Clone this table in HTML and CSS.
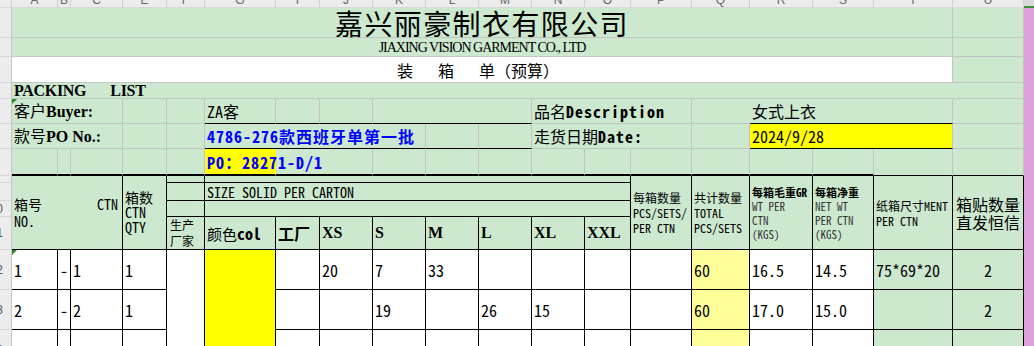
FILE: index.html
```html
<!DOCTYPE html>
<html lang="zh-CN">
<head>
<meta charset="utf-8">
<title>装箱单</title>
<link rel="stylesheet" href="styles.css">
</head>
<body>
<table class="sheet">
<colgroup>
<col class="w-rh"><col class="w-a"><col class="w-b"><col class="w-c"><col class="w-e"><col class="w-f"><col class="w-g"><col class="w-i"><col class="w-j"><col class="w-k"><col class="w-l"><col class="w-m"><col class="w-n"><col class="w-o"><col class="w-p"><col class="w-q"><col class="w-r"><col class="w-s"><col class="w-t"><col class="w-u"><col class="w-v">
</colgroup>
<tr class="h-hdr">
<td class="ch"></td>
<td class="ch"><div class="cl"><span>A</span></div></td>
<td class="ch"><div class="cl"><span>B</span></div></td>
<td class="ch"><div class="cl"><span>C</span></div></td>
<td class="ch"><div class="cl"><span>E</span></div></td>
<td class="ch"><div class="cl"><span>F</span></div></td>
<td class="ch"><div class="cl"><span>G</span></div></td>
<td class="ch"><div class="cl"><span>I</span></div></td>
<td class="ch"><div class="cl"><span>J</span></div></td>
<td class="ch"><div class="cl"><span>K</span></div></td>
<td class="ch"><div class="cl"><span>L</span></div></td>
<td class="ch"><div class="cl"><span>M</span></div></td>
<td class="ch"><div class="cl"><span>N</span></div></td>
<td class="ch"><div class="cl"><span>O</span></div></td>
<td class="ch"><div class="cl"><span>P</span></div></td>
<td class="ch"><div class="cl"><span>Q</span></div></td>
<td class="ch"><div class="cl"><span>R</span></div></td>
<td class="ch"><div class="cl"><span>S</span></div></td>
<td class="ch"><div class="cl"><span>T</span></div></td>
<td class="ch"><div class="cl"><span>U</span></div></td>
<td class="ch sel"></td>
</tr>
<tr class="h1">
<td class="rh"></td>
<td colspan="18" class="title-cn">嘉兴丽豪制衣有限公司</td>
<td></td>
<td class="pk"></td>
</tr>
<tr class="h2">
<td class="rh"></td>
<td colspan="18" class="title-en">JIAXING VISION GARMENT CO., LTD</td>
<td></td>
<td class="pk"></td>
</tr>
<tr class="h3">
<td class="rh"></td>
<td colspan="18" class="wh doc"><span>装</span><span class="sp">箱</span><span class="sp">单（预算）</span></td>
<td></td>
<td class="pk"></td>
</tr>
<tr class="h4">
<td class="rh"></td>
<td colspan="18" class="pl nr">PACKING<span class="pl-gap">LIST</span></td>
<td></td>
<td class="pk"></td>
</tr>
<tr class="h5">
<td class="rh"></td>
<td colspan="3" class="lbl mark">客户<b class="tb">Buyer:</b></td>
<td></td>
<td></td>
<td class="kb val">ZA客</td>
<td class="kb"></td>
<td class="kb"></td>
<td colspan="3" class="kb"></td>
<td colspan="3" class="lbl">品名<b class="mb">Description</b></td>
<td class="nr"></td>
<td colspan="3" class="kb val">女式上衣</td>
<td></td>
<td class="pk"></td>
</tr>
<tr class="h6">
<td class="rh"></td>
<td colspan="3" class="lbl">款号<b class="tb">PO No.:</b></td>
<td></td>
<td></td>
<td colspan="4" class="kb po">4786-276款西班牙单第一批</td>
<td class="kb"></td>
<td class="kb"></td>
<td colspan="3" class="lbl">走货日期<b class="mb">Date:</b></td>
<td></td>
<td colspan="3" class="ye kb val">2024/9/28</td>
<td></td>
<td class="pk"></td>
</tr>
<tr class="h7">
<td class="rh"></td>
<td class="kb2"></td>
<td class="kb2"></td>
<td class="kb2"></td>
<td class="kb2"></td>
<td class="kb2"></td>
<td class="ye kb2 nr po">PO：28271-D/1</td>
<td colspan="2" class="kb2"></td>
<td class="kb2"></td>
<td class="kb2"></td>
<td class="kb2"></td>
<td class="kb2"></td>
<td class="kb2"></td>
<td class="kb2"></td>
<td class="kb2"></td>
<td class="kb2"></td>
<td class="kb2"></td>
<td class="kb"></td>
<td class="kb"></td>
<td class="pk"></td>
</tr>
<tr class="h8 th">
<td class="rh"></td>
<td colspan="3" rowspan="4" class="hno">
<div class="ln"><span>箱号</span><span>CTN</span></div>
<div>NO.</div>
</td>
<td rowspan="4" class="hq"><div>箱数</div><div>CTN</div><div>QTY</div></td>
<td></td>
<td colspan="8"></td>
<td rowspan="4" class="hs"><div>每箱数量</div><div>PCS/SETS/</div><div>PER CTN</div></td>
<td rowspan="4" class="hs"><div>共计数量</div><div>TOTAL</div><div>PCS/SETS</div></td>
<td rowspan="4" class="hw"><div class="hw-t">每箱毛重GR</div><div>WT PER</div><div>CTN</div><div>(KGS)</div></td>
<td rowspan="4" class="hw"><div class="hw-t">每箱净重</div><div>NET WT</div><div>PER CTN</div><div>(KGS)</div></td>
<td rowspan="4" class="hs"><div>纸箱尺寸MENT</div><div>PER CTN</div></td>
<td rowspan="4" class="hb"><div>箱贴数量</div><div>直发恒信</div></td>
<td class="pk"></td>
</tr>
<tr class="h9 th">
<td class="rh"></td>
<td></td>
<td colspan="8" class="size">SIZE SOLID PER CARTON</td>
<td class="pk"></td>
</tr>
<tr class="h10 th">
<td class="rh"><div class="rn">10</div></td>
<td></td>
<td colspan="8"></td>
<td class="pk"></td>
</tr>
<tr class="h11 th">
<td class="rh"><div class="rn">11</div></td>
<td class="hf"><div>生产</div><div>厂家</div></td>
<td class="hc">颜色<b>col</b></td>
<td class="hc"><b>工厂</b></td>
<td class="sz">XS</td>
<td class="sz">S</td>
<td class="sz">M</td>
<td class="sz">L</td>
<td class="sz">XL</td>
<td class="sz">XXL</td>
<td class="pk"></td>
</tr>
<tr class="hd dr">
<td class="rh"><div class="rn">12</div></td>
<td class="mark">1</td>
<td>-</td>
<td>1</td>
<td>1</td>
<td rowspan="3"></td>
<td rowspan="3" class="ye"></td>
<td></td>
<td>20</td>
<td>7</td>
<td>33</td>
<td></td>
<td></td>
<td></td>
<td></td>
<td class="ly">60</td>
<td>16.5</td>
<td>14.5</td>
<td class="gr">75*69*20</td>
<td class="gr ctr">2</td>
<td class="pk"></td>
</tr>
<tr class="hd dr">
<td class="rh"><div class="rn">13</div></td>
<td>2</td>
<td>-</td>
<td>2</td>
<td>1</td>
<td></td>
<td></td>
<td>19</td>
<td></td>
<td>26</td>
<td>15</td>
<td></td>
<td></td>
<td class="ly">60</td>
<td>17.0</td>
<td>15.0</td>
<td class="gr"></td>
<td class="gr ctr">2</td>
<td class="pk"></td>
</tr>
<tr class="hd dr">
<td class="rh"><div class="rn">14</div></td>
<td></td>
<td></td>
<td></td>
<td></td>
<td></td>
<td></td>
<td></td>
<td></td>
<td></td>
<td></td>
<td></td>
<td></td>
<td class="ly"></td>
<td></td>
<td></td>
<td class="gr"></td>
<td class="gr"></td>
<td class="pk"></td>
</tr>
</table>
</body>
</html>
```
FILE: styles.css
```css
:root {
  --green: #cce8cf;
  --grid: #c4c4c4;
  --song: "Noto Sans Mono CJK SC", "Noto Sans CJK SC", "Liberation Mono", monospace;
  --cjk: "Noto Sans CJK SC", sans-serif;
  --serif: "Liberation Serif", "Noto Sans CJK SC", serif;
}

html, body {
  margin: 0;
  padding: 0;
  overflow: hidden;
  background: #ffffff;
}

body {
  width: 1034px;
  height: 346px;
}

.sheet {
  border-collapse: separate;
  border-spacing: 0;
  table-layout: fixed;
  width: 1034px;
  font-family: var(--song);
  font-size: 16px;
  color: #000;
}

.w-rh { width: 12px; }
.w-a { width: 46px; }
.w-b { width: 13px; }
.w-c { width: 52px; }
.w-e { width: 44px; }
.w-f { width: 38px; }
.w-g { width: 71px; }
.w-i { width: 44px; }
.w-j { width: 53px; }
.w-k { width: 53px; }
.w-l { width: 53px; }
.w-m { width: 53px; }
.w-n { width: 53px; }
.w-o { width: 46px; }
.w-p { width: 61px; }
.w-q { width: 58px; }
.w-r { width: 63px; }
.w-s { width: 61px; }
.w-t { width: 79px; }
.w-u { width: 71px; }
.w-v { width: 10px; }

/* row heights */
.h-hdr { height: 8px; }
.h1 { height: 30px; }
.h2 { height: 19px; }
.h3 { height: 26px; }
.h4 { height: 16px; }
.h5 { height: 25px; }
.h6 { height: 25px; }
.h7 { height: 27px; }
.h8 { height: 7px; }
.h9 { height: 18px; }
.h10 { height: 16px; }
.h11 { height: 33px; }
.hd { height: 40px; }

.sheet td {
  padding: 0;
  background: var(--green);
  border-right: 1px solid var(--grid);
  border-bottom: 1px solid var(--grid);
  white-space: nowrap;
  vertical-align: middle;
  line-height: 20px;
  overflow: visible;
}

/* table header block and data rows use black borders */
.sheet .th td {
  border-right-color: #000;
  border-bottom-color: #000;
  vertical-align: middle;
}

.sheet .dr td {
  background: #ffffff;
  border-right-color: #000;
  border-bottom-color: #000;
  padding-left: 2px;
  font-size: 16px;
}

/* modifiers */
.sheet td.wh { background: #ffffff; }
.sheet td.ye { background: #ffff00; }
.sheet td.ly { background: #ffff99; }
.sheet td.gr { background: var(--green); }
.sheet td.nr { border-right-color: transparent; }
.sheet td.kb { border-bottom-color: #000; }
.sheet td.kb2 { border-bottom: 2px solid #000; }
.sheet td.ctr { text-align: center; padding-left: 0; }

.sheet td.pk {
  background: #dda0dd;
  border-right: 0;
  border-bottom: 0;
  padding: 0;
}

.sheet td.rh {
  background: #ececec;
  border-right: 1px solid #c6c6c6;
  border-bottom: 1px solid #d6d6d6;
  padding: 0;
}

.rn {
  width: 12px;
  overflow: hidden;
  direction: rtl;
  padding-right: 9px;
  box-sizing: border-box;
  font: 12px/12px "Liberation Sans", sans-serif;
  color: #555;
}

/* column letter header */
.sheet td.ch {
  background: #ececec;
  border-right: 1px solid #d0d0d0;
  border-bottom: 1px solid #d8d8d8;
  vertical-align: top;
  line-height: 7px;
}

.sheet td.ch.sel {
  background: #d8d8d8;
  border-right: 0;
  border-bottom: 2px solid #3c8f3c;
}

.cl {
  height: 7px;
  overflow: hidden;
}

.cl span {
  display: block;
  margin-top: -7px;
  font: 12px/14px "Liberation Sans", sans-serif;
  color: #666;
  text-align: center;
}

/* titles */
.sheet td.title-cn {
  font-family: var(--cjk);
  font-size: 28px;
  line-height: 28px;
  letter-spacing: 1.4px;
  text-align: center;
  vertical-align: bottom;
}

.sheet td.title-en {
  font-family: var(--serif);
  font-size: 14px;
  line-height: 17px;
  letter-spacing: -1px;
  text-align: center;
  vertical-align: bottom;
}

.sheet td.doc {
  text-align: center;
  padding-right: 8px;
  font-size: 16px;
}

.doc .sp { margin-left: 25px; }

.sheet td.pl {
  font-family: var(--serif);
  font-weight: bold;
  font-size: 16px;
  letter-spacing: -0.3px;
  line-height: 15px;
  padding-left: 2px;
}

.pl-gap { margin-left: 24px; }

/* info rows */
.sheet td.lbl { padding-left: 2px; }
.tb {
  font-family: var(--serif);
  font-weight: bold;
}
.mb {
  font-weight: bold;
  letter-spacing: 1px;
}
.sheet td.val { padding-left: 2px; }

.sheet td.po {
  color: #0000ff;
  font-weight: bold;
  letter-spacing: 1px;
  padding-left: 2px;
}

.mark { position: relative; }
.mark::before {
  content: "";
  position: absolute;
  left: 0;
  top: 0;
  border-top: 5px solid #2a8a2a;
  border-right: 5px solid transparent;
}

/* table header cells */
.sheet td.hno {
  font-size: 14px;
  line-height: 17px;
  padding: 0 4px 0 2px;
}

.hno .ln {
  display: flex;
  justify-content: space-between;
}

.sheet td.hq {
  font-size: 14px;
  line-height: 15px;
  padding-left: 2px;
}

.sheet td.hs {
  font-size: 12px;
  line-height: 15px;
  padding-left: 2px;
}

.sheet td.hw {
  font-size: 11px;
  line-height: 14px;
  padding-left: 2px;
  color: #333;
}

.hw-t {
  font-weight: bold;
  color: #000;
}

.sheet td.hb {
  font-size: 16px;
  line-height: 18px;
  padding-left: 3px;
}

.sheet td.size {
  font-size: 14px;
  line-height: 16px;
  padding-left: 2px;
}

.sheet td.hf {
  font-size: 12px;
  line-height: 16px;
  padding-left: 3px;
}

.sheet td.hc {
  font-size: 15px;
  padding-left: 2px;
}

.hc b {
  font-size: 16px;
  font-weight: bold;
}

.sheet td.sz {
  font-family: var(--serif);
  font-weight: bold;
  font-size: 16px;
  padding-left: 2px;
}
```
